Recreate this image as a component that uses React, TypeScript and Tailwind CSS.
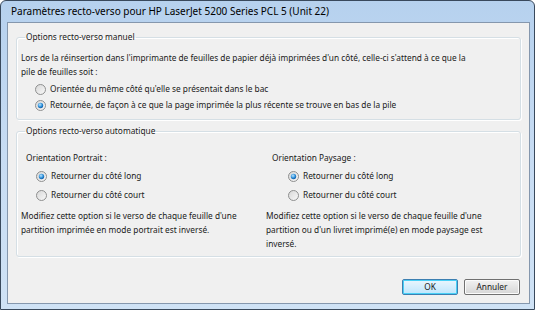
import React from 'react';

function Radio({ checked }: { checked?: boolean }) {
  return (
    <svg width="11" height="11" viewBox="0 0 11 11" className="shrink-0">
      <defs>
        <linearGradient id="radioBg" x1="0" y1="0" x2="1" y2="1">
          <stop offset="0%" stopColor="#d6d6d6" />
          <stop offset="100%" stopColor="#fafafa" />
        </linearGradient>
        <radialGradient id="radioDot" cx="0.4" cy="0.35" r="0.7">
          <stop offset="0%" stopColor="#bfe4ff" />
          <stop offset="60%" stopColor="#2a8fd8" />
          <stop offset="100%" stopColor="#0b4f9a" />
        </radialGradient>
      </defs>
      <circle cx="5.5" cy="5.5" r="5" fill="url(#radioBg)" stroke="#8e8f8f" strokeWidth="1" />
      {checked && <circle cx="5.5" cy="5.5" r="2.7" fill="url(#radioDot)" />}
    </svg>
  );
}

function RadioRow({ label, checked, className }: { label: string; checked?: boolean; className?: string }) {
  return (
    <div className={`flex items-center gap-[4px] ${className ?? ''}`}>
      <Radio checked={checked} />
      <span>{label}</span>
    </div>
  );
}

function GroupBox({ title, className, children }: { title: string; className?: string; children: React.ReactNode }) {
  return (
    <fieldset
      className={`border border-[#d5dfe5] rounded-[3px] shadow-[inset_1px_1px_0_#fff,1px_1px_0_#fff] px-[4px] ${className ?? ''}`}
    >
      <legend className="ml-[4px] px-[1px] leading-[12px]">{title}</legend>
      {children}
    </fieldset>
  );
}

function Button({ label, primary }: { label: string; primary?: boolean }) {
  return (
    <button
      className={
        primary
          ? 'w-[56px] h-[16px] rounded-[2px] border border-[#3c7fb1] shadow-[inset_0_0_0_1px_#48d0f6] bg-gradient-to-b from-[#eaf6fd] to-[#bee6fd] leading-none'
          : 'w-[56px] h-[16px] rounded-[2px] border border-[#707070] shadow-[inset_0_0_0_1px_#fbfbfb] bg-gradient-to-b from-[#f2f2f2] to-[#d6d6d6] leading-none'
      }
    >
      {label}
    </button>
  );
}

export default function App() {
  return (
    <div className="w-[535px] h-[310px] bg-white font-['Noto_Sans',sans-serif] text-[8.3px] text-[#1a1a1a]">
      <div className="h-full flex flex-col rounded-t-[6px] border border-[#39495c] bg-gradient-to-b from-[#b6d1ee] via-[#c7dcf3] to-[#cfe2f5] pl-[6px] pr-[4px] pb-[5px]">
        {/* Title bar */}
        <div className="h-[21px] flex items-center pl-[4px] text-[10px] text-black">
          Paramètres recto-verso pour HP LaserJet 5200 Series PCL 5 (Unit 22)
        </div>

        {/* Client area */}
        <div className="flex-1 flex flex-col border border-[#8597ad] bg-[#f0f0f0] px-[8px]">
          <GroupBox title="Options recto-verso manuel" className="mt-[8px] pb-[6px]">
            <p className="pt-[8px] leading-[14px]">
              Lors de la réinsertion dans l'imprimante de feuilles de papier déjà imprimées d'un côté, celle-ci s'attend à ce que la
              <br />
              pile de feuilles soit :
            </p>
            <div className="mt-[2px] pl-[14px]">
              <RadioRow className="h-[16px]" label="Orientée du même côté qu'elle se présentait dans le bac" />
              <RadioRow className="h-[16px]" checked label="Retournée, de façon à ce que la page imprimée la plus récente se trouve en bas de la pile" />
            </div>
          </GroupBox>

          <GroupBox title="Options recto-verso automatique" className="mt-[5px] pb-[5px]">
            <div className="grid grid-cols-[245px_1fr] pt-[14px]">
              <div>
                <div className="pl-[5px] leading-[14px]">Orientation Portrait :</div>
                <div className="pl-[15px] mt-[2px]">
                  <RadioRow className="h-[18px]" checked label="Retourner du côté long" />
                  <RadioRow className="h-[18px] mt-[1px]" label="Retourner du côté court" />
                </div>
                <p className="mt-[5px] leading-[14px]">
                  Modifiez cette option si le verso de chaque feuille d'une
                  <br />
                  partition imprimée en mode portrait est inversé.
                </p>
              </div>
              <div>
                <div className="pl-[6px] leading-[14px]">Orientation Paysage :</div>
                <div className="pl-[22px] mt-[2px]">
                  <RadioRow className="h-[18px]" checked label="Retourner du côté long" />
                  <RadioRow className="h-[18px] mt-[1px]" label="Retourner du côté court" />
                </div>
                <p className="mt-[5px] leading-[14px]">
                  Modifiez cette option si le verso de chaque feuille d'une
                  <br />
                  partition ou d'un livret imprimé(e) en mode paysage est
                  <br />
                  inversé.
                </p>
              </div>
            </div>
          </GroupBox>

          <div className="mt-auto mb-[8px] flex justify-end gap-[6px] pr-[1px]">
            <Button primary label="OK" />
            <Button label="Annuler" />
          </div>
        </div>
      </div>
    </div>
  );
}
